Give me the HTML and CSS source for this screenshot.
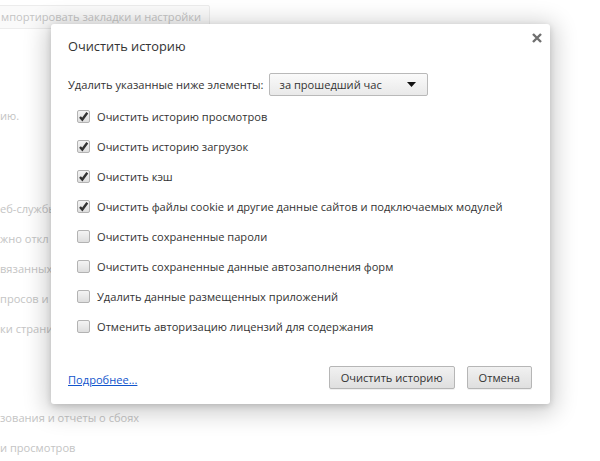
FILE: index.html
```html
<!DOCTYPE html>
<html lang="ru">
<head>
  <meta charset="UTF-8">
  <title>Очистить историю</title>
  <link rel="stylesheet" href="styles.css">
</head>
<body>
  <div class="page">
    <div class="import-btn">мпортировать закладки и настройки</div>
    <p class="bg-line first">ию.</p>
    <p class="bg-line gap">еб-службы</p>
    <p class="bg-line">жно откл</p>
    <p class="bg-line">вязанных</p>
    <p class="bg-line">просов и</p>
    <p class="bg-line">ки страни</p>
    <p class="bg-line gap2">зования и отчеты о сбоях</p>
    <p class="bg-line">и просмотров</p>
  </div>

  <div class="dialog">
    <button class="close" title="Закрыть">
      <svg width="10" height="10" viewBox="0 0 10 10"><path d="M1 1L9 9M9 1L1 9" stroke="#6f6f6f" stroke-width="2.4"/></svg>
    </button>
    <h1 class="dialog-title">Очистить историю</h1>

    <div class="period-row">
      <span>Удалить указанные ниже элементы:</span>
      <div class="select">
        <span>за прошедший час</span>
        <svg width="9" height="5" viewBox="0 0 9 5"><path d="M0 0H9L4.5 5Z" fill="#111"/></svg>
      </div>
    </div>

    <ul class="options">
      <li><span class="check on"></span>Очистить историю просмотров</li>
      <li><span class="check on"></span>Очистить историю загрузок</li>
      <li><span class="check on"></span>Очистить кэш</li>
      <li><span class="check on"></span>Очистить файлы cookie и другие данные сайтов и подключаемых модулей</li>
      <li><span class="check"></span>Очистить сохраненные пароли</li>
      <li><span class="check"></span>Очистить сохраненные данные автозаполнения форм</li>
      <li><span class="check"></span>Удалить данные размещенных приложений</li>
      <li><span class="check"></span>Отменить авторизацию лицензий для содержания</li>
    </ul>

    <div class="footer">
      <a href="#" class="more">Подробнее...</a>
      <div class="buttons">
        <button class="btn">Очистить историю</button>
        <button class="btn">Отмена</button>
      </div>
    </div>
  </div>
</body>
</html>
```

FILE: styles.css
```css
body {
  margin: 0;
  background: #fff;
  font-family: "Open Sans", "Noto Sans", sans-serif;
  font-size: 11.1px;
  color: #333;
  overflow: hidden;
}

/* faded settings page behind the dialog */
.page {
  height: 461px;
  color: #c4c4c4;
}

.import-btn {
  display: inline-block;
  margin: 5px 0 0 -4px;
  padding: 3px 8px 4px 4px;
  border: 1px solid #ececec;
  border-radius: 2px;
  background: #fafafa;
  line-height: 15px;
}

.bg-line {
  margin: 0;
  height: 30px;
  line-height: 30px;
}

.bg-line.first {
  margin-top: 72px;
}

.bg-line.gap {
  margin-top: 63px;
}

.bg-line.gap2 {
  margin-top: 59px;
}

/* dialog */
.dialog {
  position: absolute;
  left: 51px;
  top: 24px;
  width: 499px;
  height: 380px;
  box-sizing: border-box;
  padding: 12px 18px 15px 17px;
  background: #fff;
  border-radius: 3px;
  box-shadow: 0 4px 23px 5px rgba(0,0,0,0.2), 0 2px 6px rgba(0,0,0,0.15);
  display: flex;
  flex-direction: column;
}

.close {
  position: absolute;
  top: 6px;
  right: 5px;
  width: 16px;
  height: 16px;
  padding: 0;
  border: none;
  background: none;
  display: flex;
  align-items: center;
  justify-content: center;
}

.dialog-title {
  margin: 0;
  font-size: 12.8px;
  font-weight: normal;
  line-height: 20px;
  color: #333;
}

.period-row {
  display: flex;
  align-items: center;
  gap: 5px;
  margin-top: 17px;
  height: 23px;
}

.select {
  width: 159px;
  height: 23px;
  box-sizing: border-box;
  padding: 0 11px 0 10px;
  border: 1px solid #b9b9b9;
  border-radius: 2px;
  background: linear-gradient(#fafafa, #e9e9e9);
  display: flex;
  align-items: center;
  justify-content: space-between;
  color: #333;
}

.options {
  list-style: none;
  margin: 5px 0 0;
  padding: 0 0 0 9px;
}

.options li {
  height: 30px;
  display: flex;
  align-items: center;
  gap: 7px;
  white-space: nowrap;
}

.check {
  width: 13px;
  height: 13px;
  box-sizing: border-box;
  border: 1px solid #b3b3b3;
  border-radius: 2px;
  background: linear-gradient(#f4f4f4, #dedede);
  flex-shrink: 0;
}

.check.on {
  background: url("data:image/svg+xml,%3Csvg xmlns='http://www.w3.org/2000/svg' width='11' height='11' viewBox='0 0 11 11'%3E%3Cpath d='M2 6L4.3 8.5L9.3 1.8' fill='none' stroke='%23333' stroke-width='2.4'/%3E%3C/svg%3E") center / 11px 11px no-repeat, linear-gradient(#f4f4f4, #dedede);
}

.footer {
  margin-top: auto;
  display: flex;
  align-items: center;
  justify-content: space-between;
}

.more {
  color: #15c;
  text-decoration: underline;
  margin-top: 4px;
}

.buttons {
  display: flex;
  gap: 12px;
}

.btn {
  height: 23px;
  padding: 0 11px;
  border: 1px solid #b6b6b6;
  border-radius: 2px;
  background: linear-gradient(#f1f1f1, #dfdfdf);
  font-family: inherit;
  font-size: 11.1px;
  color: #333;
  box-shadow: 0 1px 0 rgba(0,0,0,0.06);
}
```
